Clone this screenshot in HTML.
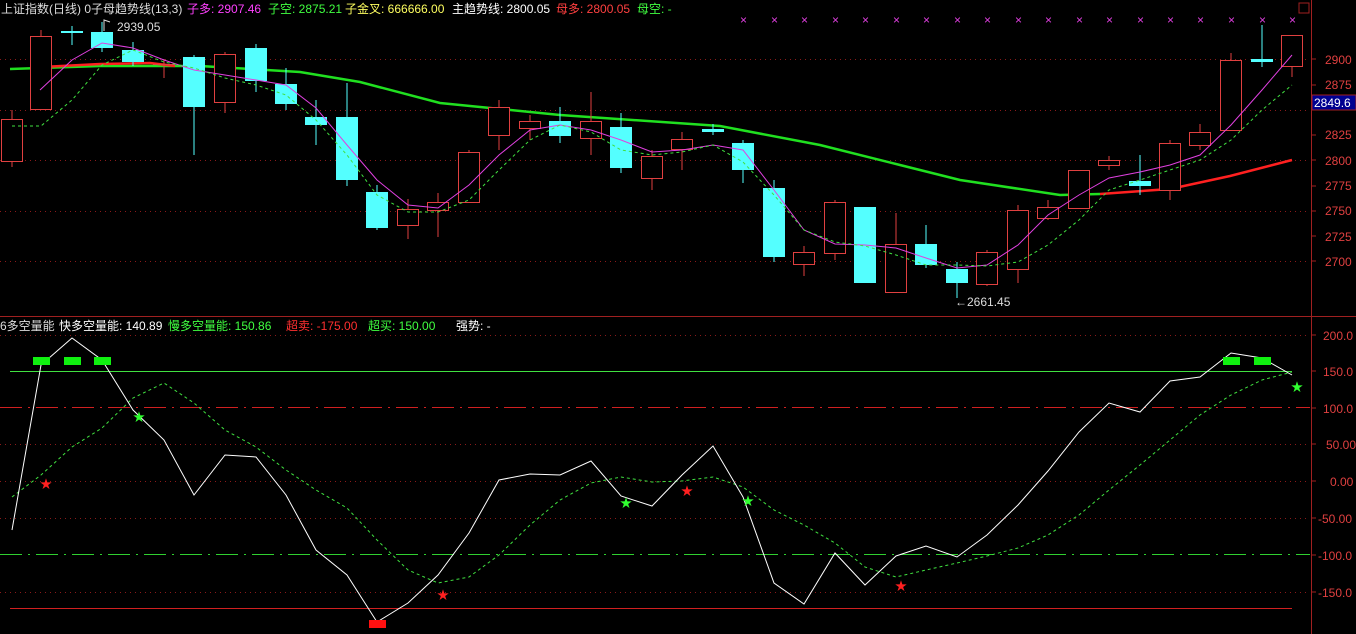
<!DOCTYPE html>
<html><head><meta charset="utf-8"><style>
html,body{margin:0;padding:0;background:#000;width:1356px;height:634px;overflow:hidden}
svg{display:block}
text{font-family:"Liberation Sans","Noto Sans CJK SC",sans-serif;font-size:12px}
</style></head><body>
<svg width="1356" height="634" xmlns="http://www.w3.org/2000/svg">
<rect width="1356" height="634" fill="#000"/>
<!-- grid upper -->
<g stroke="#8a1a1a" stroke-dasharray="1,4" stroke-width="1">
<line x1="0" y1="59.5" x2="1310" y2="59.5"/><line x1="0" y1="110.5" x2="1310" y2="110.5"/><line x1="0" y1="160.5" x2="1310" y2="160.5"/><line x1="0" y1="211.5" x2="1310" y2="211.5"/><line x1="0" y1="261.5" x2="1310" y2="261.5"/>
<line x1="0" y1="335.5" x2="1310" y2="335.5"/><line x1="0" y1="444.5" x2="1310" y2="444.5"/><line x1="0" y1="481.5" x2="1310" y2="481.5"/><line x1="0" y1="518.5" x2="1310" y2="518.5"/><line x1="0" y1="592.5" x2="1310" y2="592.5"/>
</g>
<!-- axes -->
<line x1="1311.5" y1="0" x2="1311.5" y2="634" stroke="#a02020"/>
<line x1="0" y1="316.5" x2="1356" y2="316.5" stroke="#a02020"/>
<rect x="1299" y="3" width="10" height="10" fill="none" stroke="#a02020"/>
<g stroke="#a02020"><line x1="1311" y1="59" x2="1316" y2="59"/><line x1="1311" y1="85" x2="1316" y2="85"/><line x1="1311" y1="110" x2="1316" y2="110"/><line x1="1311" y1="135" x2="1316" y2="135"/><line x1="1311" y1="160" x2="1316" y2="160"/><line x1="1311" y1="186" x2="1316" y2="186"/><line x1="1311" y1="211" x2="1316" y2="211"/><line x1="1311" y1="236" x2="1316" y2="236"/><line x1="1311" y1="261" x2="1316" y2="261"/>
<line x1="1311" y1="335" x2="1316" y2="335"/><line x1="1311" y1="371" x2="1316" y2="371"/><line x1="1311" y1="408" x2="1316" y2="408"/><line x1="1311" y1="444" x2="1316" y2="444"/><line x1="1311" y1="481" x2="1316" y2="481"/><line x1="1311" y1="518" x2="1316" y2="518"/><line x1="1311" y1="555" x2="1316" y2="555"/><line x1="1311" y1="592" x2="1316" y2="592"/></g>
<g fill="#e04040" font-size="12">
<text x="1325" y="64">2900</text><text x="1325" y="89">2875</text><text x="1325" y="139">2825</text><text x="1325" y="165">2800</text><text x="1325" y="190">2775</text><text x="1325" y="215">2750</text><text x="1325" y="241">2725</text><text x="1325" y="266">2700</text>
<text x="1323" y="340">200.0</text><text x="1323" y="376">150.0</text><text x="1323" y="413">100.0</text><text x="1326" y="449">50.00</text><text x="1330" y="486">0.00</text><text x="1318" y="523">-50.00</text><text x="1318" y="560">-100.0</text><text x="1318" y="597">-150.0</text>
</g>
<rect x="1312" y="95" width="44" height="15" fill="#000090" stroke="#a02020"/>
<text x="1314" y="107" fill="#fff">2849.6</text>
<!-- header -->
<text x="1" y="13" fill="#ddd">上证指数(日线) 0子母趋势线(13,3)</text>
<text x="187" y="13" fill="#ff40ff">子多: 2907.46</text>
<text x="268" y="13" fill="#40ff40">子空: 2875.21</text>
<text x="345" y="13" fill="#ffff60">子金叉: 666666.00</text>
<text x="452" y="13" fill="#fff">主趋势线: 2800.05</text>
<text x="556" y="13" fill="#ff4040">母多: 2800.05</text>
<text x="637" y="13" fill="#40ff40">母空: -</text>
<text x="0" y="330" fill="#ddd">6多空量能</text>
<text x="59" y="330" fill="#fff">快多空量能: 140.89</text>
<text x="168" y="330" fill="#40ff40">慢多空量能: 150.86</text>
<text x="286" y="330" fill="#ff3030">超卖: -175.00</text>
<text x="368" y="330" fill="#40ff40">超买: 150.00</text>
<text x="456" y="330" fill="#fff">强势: -</text>
<!-- magenta x marks -->
<g fill="#e040e0" font-size="10"><text x="740" y="24">×</text><text x="771" y="24">×</text><text x="801" y="24">×</text><text x="832" y="24">×</text><text x="862" y="24">×</text><text x="893" y="24">×</text><text x="923" y="24">×</text><text x="954" y="24">×</text><text x="984" y="24">×</text><text x="1015" y="24">×</text><text x="1045" y="24">×</text><text x="1076" y="24">×</text><text x="1106" y="24">×</text><text x="1137" y="24">×</text><text x="1167" y="24">×</text><text x="1197" y="24">×</text><text x="1228" y="24">×</text><text x="1259" y="24">×</text><text x="1289" y="24">×</text></g>
<!-- MA lines -->
<polyline fill="none" stroke="#20e020" stroke-width="2.5" points="10,69 100,66 200,66 300,72 360,82 440,103 560,115 720,126 820,145 900,165 960,180 1060,195 1100,194"/>
<polyline fill="none" stroke="#ff2020" stroke-width="2.5" points="42,67 100,64 150,63 175,66"/>
<polyline fill="none" stroke="#ff2020" stroke-width="2.5" points="1100,194 1170,189 1230,176 1292,160"/>
<!-- candles wicks -->
<g stroke-width="1">
<g stroke="#e04040">
<line x1="12" y1="110" x2="12" y2="167"/><line x1="41" y1="30" x2="41" y2="109"/><line x1="164" y1="59" x2="164" y2="78"/><line x1="225" y1="52" x2="225" y2="113"/><line x1="408" y1="199" x2="408" y2="239"/><line x1="438" y1="193" x2="438" y2="237"/><line x1="469" y1="150" x2="469" y2="202"/><line x1="499" y1="100" x2="499" y2="150"/><line x1="530" y1="115" x2="530" y2="140"/><line x1="591" y1="92" x2="591" y2="155"/><line x1="652" y1="150" x2="652" y2="190"/><line x1="682" y1="132" x2="682" y2="170"/><line x1="804" y1="246" x2="804" y2="276"/><line x1="835" y1="200" x2="835" y2="260"/><line x1="896" y1="213" x2="896" y2="293"/><line x1="987" y1="250" x2="987" y2="286"/><line x1="1018" y1="205" x2="1018" y2="283"/><line x1="1048" y1="200" x2="1048" y2="220"/><line x1="1079" y1="170" x2="1079" y2="208"/><line x1="1109" y1="156" x2="1109" y2="170"/><line x1="1170" y1="140" x2="1170" y2="200"/><line x1="1200" y1="124" x2="1200" y2="150"/><line x1="1231" y1="53" x2="1231" y2="130"/><line x1="1292" y1="35" x2="1292" y2="77"/>
</g>
<g stroke="#54ffff">
<line x1="72" y1="26" x2="72" y2="45"/><line x1="102" y1="22" x2="102" y2="52"/><line x1="133" y1="42" x2="133" y2="66"/><line x1="194" y1="55" x2="194" y2="155"/><line x1="256" y1="44" x2="256" y2="92"/><line x1="286" y1="68" x2="286" y2="110"/><line x1="316" y1="100" x2="316" y2="145"/><line x1="347" y1="83" x2="347" y2="186"/><line x1="377" y1="185" x2="377" y2="230"/><line x1="560" y1="107" x2="560" y2="143"/><line x1="621" y1="113" x2="621" y2="173"/><line x1="713" y1="124" x2="713" y2="135"/><line x1="743" y1="140" x2="743" y2="183"/><line x1="774" y1="180" x2="774" y2="262"/><line x1="865" y1="207" x2="865" y2="283"/><line x1="926" y1="225" x2="926" y2="268"/><line x1="957" y1="262" x2="957" y2="298"/><line x1="1140" y1="155" x2="1140" y2="195"/><line x1="1262" y1="25" x2="1262" y2="67"/>
</g>
</g>
<!-- red bodies -->
<g fill="#000" stroke="#e04040">
<rect x="1.5" y="119.5" width="21" height="42"/><rect x="30.5" y="36.5" width="21" height="73"/><rect x="214.5" y="54.5" width="21" height="48"/><rect x="397.5" y="209.5" width="21" height="16"/><rect x="427.5" y="202.5" width="21" height="8"/><rect x="458.5" y="152.5" width="21" height="50"/><rect x="488.5" y="107.5" width="21" height="28"/><rect x="519.5" y="121.5" width="21" height="7"/><rect x="580.5" y="121.5" width="21" height="17"/><rect x="641.5" y="156.5" width="21" height="22"/><rect x="671.5" y="139.5" width="21" height="10"/><rect x="793.5" y="252.5" width="21" height="12"/><rect x="824.5" y="202.5" width="21" height="51"/><rect x="885.5" y="244.5" width="21" height="48"/><rect x="976.5" y="252.5" width="21" height="32"/><rect x="1007.5" y="210.5" width="21" height="59"/><rect x="1037.5" y="207.5" width="21" height="11"/><rect x="1068.5" y="170.5" width="21" height="38"/><rect x="1098.5" y="160.5" width="21" height="5"/><rect x="1159.5" y="143.5" width="21" height="47"/><rect x="1189.5" y="132.5" width="21" height="13"/><rect x="1220.5" y="60.5" width="21" height="70"/><rect x="1281.5" y="35.5" width="21" height="31"/>
<line x1="153" y1="64.5" x2="175" y2="64.5"/>
</g>
<!-- cyan bodies -->
<g fill="#54ffff">
<rect x="61" y="31" width="22" height="2"/><rect x="91" y="32" width="22" height="16"/><rect x="122" y="50" width="22" height="12"/><rect x="183" y="57" width="22" height="50"/><rect x="245" y="48" width="22" height="33"/><rect x="275" y="84" width="22" height="20"/><rect x="305" y="117" width="22" height="8"/><rect x="336" y="117" width="22" height="63"/><rect x="366" y="192" width="22" height="36"/><rect x="549" y="121" width="22" height="15"/><rect x="610" y="127" width="22" height="41"/><rect x="702" y="129" width="22" height="3"/><rect x="732" y="143" width="22" height="27"/><rect x="763" y="188" width="22" height="69"/><rect x="854" y="207" width="22" height="76"/><rect x="915" y="244" width="22" height="21"/><rect x="946" y="269" width="22" height="14"/><rect x="1129" y="181" width="22" height="5"/><rect x="1251" y="59" width="22" height="3"/>
</g>
<!-- fast/slow lines upper -->
<polyline fill="none" stroke="#e040e0" stroke-width="1" points="40,90 72,60 102,43 133,48 164,60 194,70 225,75 256,80 286,85 316,108 347,145 377,180 408,205 438,208 469,185 499,155 530,130 560,125 591,130 621,140 652,152 682,150 713,145 743,150 774,190 804,230 835,244 865,245 896,248 926,258 957,268 987,265 1018,245 1048,215 1079,195 1109,178 1140,172 1170,165 1200,155 1231,125 1262,90 1292,55"/>
<polyline fill="none" stroke="#40e040" stroke-width="1" stroke-dasharray="3,3" points="12,126 41,126 72,100 102,65 133,50 164,62 194,68 225,78 256,85 286,95 316,120 347,155 377,195 408,212 438,212 469,200 499,170 530,140 560,125 591,132 621,150 652,155 682,152 713,145 743,162 774,195 804,230 835,242 865,246 896,255 926,265 957,265 987,266 1018,262 1048,245 1079,220 1109,190 1140,180 1170,170 1200,160 1231,140 1262,110 1292,85"/>
<!-- annotations -->
<polyline fill="none" stroke="#ddd" points="104,31 104,20 110,22"/>
<text x="117" y="31" fill="#ddd">2939.05</text>
<text x="955" y="306" fill="#ddd">←2661.45</text>
<!-- lower reference lines -->
<line x1="10" y1="371.5" x2="1292" y2="371.5" stroke="#40e040"/>
<line x1="0" y1="407.5" x2="1310" y2="407.5" stroke="#d02020" stroke-dasharray="22,6,2,6"/>
<line x1="0" y1="554.5" x2="1310" y2="554.5" stroke="#30d030" stroke-dasharray="22,6,2,6"/>
<line x1="10" y1="608.5" x2="1292" y2="608.5" stroke="#d02020"/>
<!-- lower lines -->
<polyline fill="none" stroke="#40e040" stroke-width="1" stroke-dasharray="3,3" points="12,497 41,475 72,447 102,428 133,398 164,383 194,403 225,430 256,447 286,470 316,490 347,508 377,540 408,570 438,583 469,577 499,555 530,525 560,500 591,483 621,477 652,482 682,481 713,477 743,487 774,510 804,525 835,543 865,567 896,577 926,570 957,563 987,556 1018,548 1048,535 1079,515 1109,490 1140,465 1170,440 1200,415 1231,395 1262,380 1292,372"/>
<polyline fill="none" stroke="#fff" stroke-width="1" points="12,530 41,365 72,338 102,360 133,410 164,440 194,495 225,455 256,457 286,495 316,550 347,575 377,622 408,603 438,575 469,533 499,480 530,474 560,475 591,461 621,496 652,506 682,475 713,446 743,497 774,583 804,604 835,553 865,585 896,556 926,546 957,557 987,535 1018,505 1048,471 1079,432 1109,403 1140,412 1170,381 1200,377 1231,353 1262,358 1292,375"/>
<!-- bars -->
<g fill="#10f010"><rect x="33" y="357" width="17" height="8"/><rect x="64" y="357" width="17" height="8"/><rect x="94" y="357" width="17" height="8"/><rect x="1223" y="357" width="17" height="8"/><rect x="1254" y="357" width="17" height="8"/></g>
<rect x="369" y="620" width="17" height="8" fill="#ff1010"/>
<!-- stars -->
<g font-size="14" font-family="DejaVu Sans,sans-serif" text-anchor="middle">
<text x="46" y="488" fill="#ff2020">★</text><text x="443" y="599" fill="#ff2020">★</text><text x="687" y="495" fill="#ff2020">★</text><text x="901" y="590" fill="#ff2020">★</text>
<text x="139" y="421" fill="#30ff30">★</text><text x="626" y="507" fill="#30ff30">★</text><text x="748" y="505" fill="#30ff30">★</text><text x="1297" y="391" fill="#30ff30">★</text>
</g>
</svg>
</body></html>
